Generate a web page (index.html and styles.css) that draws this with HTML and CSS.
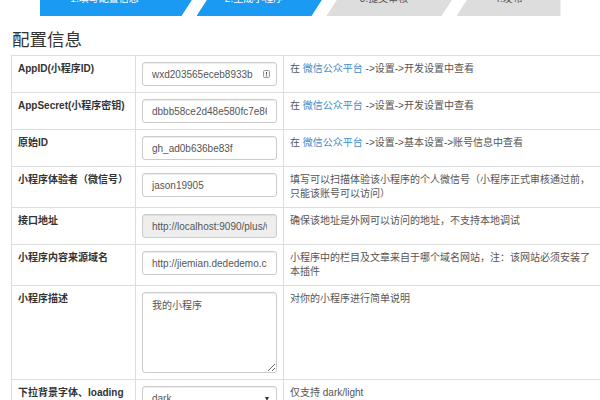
FILE: index.html
```html
<!DOCTYPE html>
<html lang="zh-CN">
<head>
<meta charset="utf-8">
<title>配置信息</title>
<link rel="stylesheet" href="styles.css">
</head>
<body>
<div class="steps">
  <div class="step step-first">1.填写配置信息</div>
  <div class="step step-mid">2.生成小程序</div>
  <div class="step step-mid todo">3.提交审核</div>
  <div class="step step-last todo">4.发布</div>
</div>
<div class="page">
  <h3 class="title">配置信息</h3>
  <table class="form-table">
    <colgroup><col class="c1"><col class="c2"><col></colgroup>
    <tr>
      <td class="label">AppID(小程序ID)</td>
      <td><div class="input-wrap"><input class="field" value="wxd203565eceb8933b"><svg class="key-icon" width="7" height="8" viewBox="0 0 7 8"><rect x="0.5" y="0.5" width="6" height="7" rx="1" fill="#f4f4f4" stroke="#999"/><rect x="3" y="2" width="1" height="2.6" fill="#555"/><rect x="3" y="5.4" width="1" height="1" fill="#555"/></svg></div></td>
      <td class="desc">在 <span class="link">微信公众平台</span> -&gt;设置-&gt;开发设置中查看</td>
    </tr>
    <tr>
      <td class="label">AppSecret(小程序密钥)</td>
      <td><input class="field" value="dbbb58ce2d48e580fc7e86e0a1f2b3c4"></td>
      <td class="desc">在 <span class="link">微信公众平台</span> -&gt;设置-&gt;开发设置中查看</td>
    </tr>
    <tr>
      <td class="label">原始ID</td>
      <td><input class="field" value="gh_ad0b636be83f"></td>
      <td class="desc">在 <span class="link">微信公众平台</span> -&gt;设置-&gt;基本设置-&gt;账号信息中查看</td>
    </tr>
    <tr>
      <td class="label">小程序体验者（微信号）</td>
      <td><input class="field" value="jason19905"></td>
      <td class="desc">填写可以扫描体验该小程序的个人微信号（小程序正式审核通过前，只能该账号可以访问）</td>
    </tr>
    <tr>
      <td class="label">接口地址</td>
      <td><input class="field" value="http://localhost:9090/plus/weapp.php" disabled></td>
      <td class="desc">确保该地址是外网可以访问的地址，不支持本地调试</td>
    </tr>
    <tr>
      <td class="label">小程序内容来源域名</td>
      <td><input class="field" value="http://jiemian.dededemo.com"></td>
      <td class="desc">小程序中的栏目及文章来自于哪个域名网站，注：该网站必须安装了本插件</td>
    </tr>
    <tr>
      <td class="label">小程序描述</td>
      <td><textarea class="area">我的小程序</textarea></td>
      <td class="desc">对你的小程序进行简单说明</td>
    </tr>
    <tr>
      <td class="label">下拉背景字体、loading</td>
      <td><div class="select-wrap"><select class="field select"><option>dark</option><option>light</option></select></div></td>
      <td class="desc">仅支持 dark/light</td>
    </tr>
  </table>
</div>
</body>
</html>
```
FILE: styles.css
```css
* { box-sizing: border-box; }
body {
  margin: 0;
  font-family: "Liberation Sans", "Noto Sans CJK SC", sans-serif;
  font-size: 10px;
  line-height: 14px;
  color: #333;
  background: #fff;
}
.steps {
  display: flex;
  width: 521px;
  height: 34px;
  margin: -18px auto 0;
}
.step {
  height: 34px;
  line-height: 34px;
  text-align: center;
  color: #fff;
  background: #1a9af2;
  font-size: 10px;
  white-space: nowrap;
}
.step.todo { background: #dddddd; color: #555; }
.step-first {
  width: 164px;
  padding-right: 34px;
  clip-path: polygon(0 0, 100% 0, calc(100% - 22px) 100%, 0 100%);
}
.step-mid {
  width: 137px;
  margin-left: -7px;
  padding-right: 22px;
  clip-path: polygon(22px 0, 100% 0, calc(100% - 22px) 100%, 0 100%);
}
.step-last {
  width: 104px;
  margin-left: -7px;
  clip-path: polygon(22px 0, 100% 0, 100% 100%, 0 100%);
}
.page { padding-left: 11px; }
.title {
  font-size: 17.5px;
  line-height: 20px;
  font-weight: normal;
  color: #333;
  margin: 14px 0 5px 1px;
}
.form-table {
  border-collapse: collapse;
  table-layout: fixed;
  width: 590px;
}
.c1 { width: 124px; }
.c2 { width: 148px; }
.form-table td {
  border: 1px solid #ddd;
  padding: 6px;
  vertical-align: top;
}
.label { font-weight: bold; color: #333; }
.desc { color: #555; }
.link { color: #428bca; }
.field {
  display: block;
  width: 100%;
  height: 24px;
  margin: 0;
  padding: 0 9px;
  border: 1px solid #ccc;
  border-radius: 3px;
  background: #fff;
  box-shadow: inset 0 1px 1px rgba(0,0,0,.075);
  font-family: "Liberation Sans", "Noto Sans CJK SC", sans-serif;
  font-size: 10px;
  color: #555;
  outline: none;
}
.field:disabled { background: #eee; color: #555; -webkit-text-fill-color: #555; opacity: 1; }
.input-wrap { position: relative; }
.input-wrap .field { padding-right: 20px; }
.key-icon { position: absolute; right: 7px; top: 8px; }
.area {
  display: block;
  width: 100%;
  height: 81px;
  margin: 0;
  padding: 6px 9px;
  border: 1px solid #ccc;
  border-radius: 3px;
  box-shadow: inset 0 1px 1px rgba(0,0,0,.075);
  font-family: "Liberation Sans", "Noto Sans CJK SC", sans-serif;
  font-size: 10px;
  line-height: 14px;
  color: #555;
  resize: vertical;
  outline: none;
}
.select-wrap { position: relative; }
.select { -webkit-appearance: none; appearance: none; }
.select-wrap::after {
  content: "";
  position: absolute;
  right: 8px;
  top: 11px;
  border-left: 2.5px solid transparent;
  border-right: 2.5px solid transparent;
  border-top: 4px solid #333;
}
```
